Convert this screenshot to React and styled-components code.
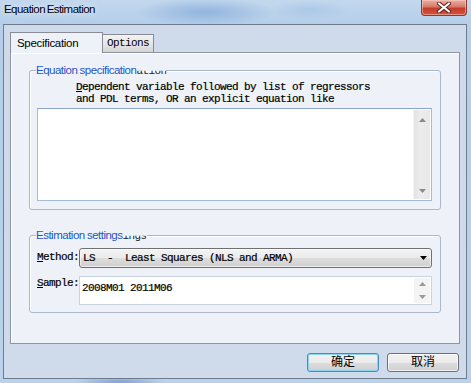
import React from 'react'
import styled, { createGlobalStyle } from 'styled-components'

const mono = `"Liberation Mono", "DejaVu Sans Mono", monospace`
const sans = `"Liberation Sans", Arial, sans-serif`
const cjk = `"Liberation Sans", "Noto Sans CJK SC", sans-serif`

const GlobalStyle = createGlobalStyle`
  html, body {
    margin: 0;
    padding: 0;
    background: #fff;
  }
  body {
    width: 471px;
    height: 383px;
    overflow: hidden;
  }
`

const Window = styled.div`
  width: 471px;
  height: 383px;
  box-sizing: border-box;
  padding: 0 4px 4px 3px;
  display: flex;
  flex-direction: column;
  background:
    radial-gradient(ellipse 70px 14px at 205px 12px, rgba(110, 155, 210, 0.55), transparent),
    radial-gradient(ellipse 40px 10px at 310px 10px, rgba(140, 180, 225, 0.35), transparent),
    radial-gradient(ellipse 45px 6px at 120px 382px, rgba(90, 130, 185, 0.6), transparent),
    linear-gradient(to bottom, #c3d8ee, #b5cee9 24px, #bad2eb);
`

const TitleBar = styled.div`
  height: 24px;
  display: flex;
  justify-content: space-between;
  align-items: flex-start;
`

const Title = styled.div`
  padding: 3px 0 0 1px;
  font-family: ${sans};
  font-size: 11.5px;
  letter-spacing: -0.55px;
  word-spacing: -1px;
  color: #000;
  text-shadow: 0 0 6px rgba(255, 255, 255, 0.9);
`

const CloseButton = styled.div`
  width: 46px;
  height: 16px;
  box-sizing: border-box;
  border: 1px solid #8a3b30;
  border-top: none;
  border-radius: 0 0 4px 4px;
  background: linear-gradient(to bottom, #eab1a6, #d77a6a 45%, #c53c2c 55%, #d0553d);
  box-shadow: inset 0 0 0 1px rgba(255, 210, 200, 0.5);
  display: flex;
  align-items: center;
  justify-content: center;
`

const Client = styled.div`
  flex: 1;
  box-sizing: border-box;
  border: 1px solid #6f7c8d;
  background: #cfdbea;
  padding: 7px 6px 6px 6px;
  display: flex;
  flex-direction: column;
`

const TabRow = styled.div`
  height: 20px;
  display: flex;
  align-items: flex-end;
`

const Tab = styled.div`
  box-sizing: border-box;
  border: 1px solid #898c95;
  border-bottom: none;
  position: relative;
  ${p => p.active ? `
    width: 93px;
    height: 21px;
    margin-bottom: -1px;
    z-index: 1;
    background: #eef2f8;
    padding: 4px 0 0 6px;
    font-family: ${sans};
    font-size: 11.5px;
    letter-spacing: -0.3px;
  ` : `
    width: 51px;
    height: 18px;
    background: linear-gradient(to bottom, #f3f3f3, #e6e6e6 50%, #d6d6d6);
    border-left: none;
    padding: 2px 0 0 4px;
    font-family: ${mono};
    font-size: 11px;
    letter-spacing: -0.6px;
  `}
  color: #000;
  white-space: pre;
`

const Panel = styled.div`
  height: 292px;
  box-sizing: border-box;
  border: 1px solid #8d95a1;
  background: #eef2f8;
  box-shadow: inset 1px 1px 0 #fff;
  padding: 10px 18px 0 18px;
  display: flex;
  flex-direction: column;
  gap: 18px;
`

const Group = styled.fieldset`
  margin: 0;
  min-width: 0;
  border: 1px solid #a9b8ca;
  border-radius: 3px;
  box-shadow: inset 1px 1px 0 #fff;
  padding: ${p => p.pad};
`

const Legend = styled.legend`
  margin-left: -1px;
  padding: 0;
  height: 14px;
  line-height: 14px;
  display: flex;
  align-items: center;
`

const LegendText = styled.span`
  font-family: ${sans};
  font-size: 11.5px;
  letter-spacing: -0.5px;
  word-spacing: -0.5px;
  color: #1d55c8;
`

const LegendGhost = styled.span`
  font-family: ${mono};
  font-size: 11px;
  letter-spacing: -0.6px;
  color: #222;
  clip-path: inset(55% 0 0 0);
  padding-top: 2px;
`

const MonoText = styled.div`
  font-family: ${mono};
  font-size: 11px;
  letter-spacing: -0.6px;
  line-height: 12px;
  color: #000;
  white-space: pre;
  -webkit-text-stroke: 0.2px #000;
`

const Description = styled(MonoText)`
  padding: 4px 0 0 39px;
  height: 27px;
`

const Hot = styled.span`
  text-decoration: underline;
`

const TextArea = styled.div`
  height: 93px;
  box-sizing: border-box;
  border: 1px solid #a4bad6;
  border-top-color: #8aa6cc;
  background: #fff;
  display: flex;
  justify-content: flex-end;
  padding: 1px;
`

const ScrollBar = styled.div`
  width: 17px;
  box-sizing: border-box;
  background: linear-gradient(to right, #e3e3e3, #ececec 40%, #e8e8e8);
  border-left: 1px solid #f4f4f4;
  display: flex;
  flex-direction: column;
  justify-content: space-between;
  align-items: center;
  padding: 8px 0 6px;
`

const Row = styled.div`
  display: grid;
  grid-template-columns: 42px 1fr;
  margin-bottom: ${p => p.gap || 0}px;
`

const Label = styled(MonoText)`
  padding-top: ${p => p.top}px;
`

const Select = styled.div`
  height: 20px;
  box-sizing: border-box;
  border: 1px solid #707070;
  border-radius: 3px;
  background: linear-gradient(to bottom, #f3f3f3, #ebebeb 50%, #dddddd 50%, #d0d0d0);
  box-shadow: inset 0 0 0 1px rgba(255, 255, 255, 0.6);
  display: flex;
  align-items: center;
  justify-content: space-between;
  padding: 0 4px 0 3px;
`

const SampleBox = styled.div`
  height: 29px;
  box-sizing: border-box;
  border: 1px solid #c9d3de;
  background: #fff;
  display: flex;
  justify-content: space-between;
  padding: 1px 1px 1px 2px;
`

const SampleText = styled(MonoText)`
  padding-top: 4px;
`

const Spin = styled.div`
  width: 16px;
  background: #f4f4f4;
  display: flex;
  flex-direction: column;
  justify-content: space-around;
  align-items: center;
`

const ButtonRow = styled.div`
  margin-top: 9px;
  display: flex;
  justify-content: flex-end;
  gap: 8px;
  padding-right: 1px;
`

const Button = styled.div`
  width: 72px;
  height: 19px;
  box-sizing: border-box;
  border: 1px solid ${p => p.focused ? '#3c8fc8' : '#707070'};
  border-radius: 3px;
  background: linear-gradient(to bottom, #f2f2f2, #ebebeb 50%, #dddddd 50%, #cfcfcf);
  box-shadow: ${p => p.focused ? 'inset 0 0 0 1px #8fd3f3' : 'inset 0 0 0 1px rgba(255,255,255,0.7)'};
  font-family: ${cjk};
  font-size: 12px;
  line-height: 17px;
  text-align: center;
  color: #000;
`

const Arrow = ({ up, color = '#8a8a8a', w = 7, h = 4 }) => (
  <svg width={w} height={h} viewBox={`0 0 ${w} ${h}`}>
    <polygon
      points={up ? `0,${h} ${w},${h} ${w / 2},0` : `0,0 ${w},0 ${w / 2},${h}`}
      fill={color}
    />
  </svg>
)

const CloseX = () => (
  <svg width="14" height="11" viewBox="0 0 14 11">
    <path
      d="M2 1.5 L12 9.5 M12 1.5 L2 9.5"
      stroke="#5a1f18"
      strokeWidth="4"
      strokeLinecap="round"
      fill="none"
    />
    <path
      d="M2 1.5 L12 9.5 M12 1.5 L2 9.5"
      stroke="#fff"
      strokeWidth="2.2"
      strokeLinecap="round"
      fill="none"
    />
  </svg>
)

export default function App() {
  return (
    <>
      <GlobalStyle />
      <Window>
        <TitleBar>
          <Title>Equation Estimation</Title>
          <CloseButton>
            <CloseX />
          </CloseButton>
        </TitleBar>
        <Client>
          <TabRow>
            <Tab active>Specification</Tab>
            <Tab>Options</Tab>
          </TabRow>
          <Panel>
            <Group pad="0 8px 8px 7px">
              <Legend>
                <LegendText>Equation specification</LegendText>
                <LegendGhost>ation</LegendGhost>
              </Legend>
              <Description>
                <Hot>D</Hot>ependent variable followed by list of regressors{'\n'}and PDL terms, OR an explicit equation like
              </Description>
              <TextArea>
                <ScrollBar>
                  <Arrow up />
                  <Arrow />
                </ScrollBar>
              </TextArea>
            </Group>
            <Group pad="6px 8px 7px 7px">
              <Legend>
                <LegendText>Estimation settings</LegendText>
                <LegendGhost>ings</LegendGhost>
              </Legend>
              <Row gap={8}>
                <Label top={3}>
                  <Hot>M</Hot>ethod:
                </Label>
                <Select>
                  <MonoText>LS  -  Least Squares (NLS and ARMA)</MonoText>
                  <Arrow color="#000" w={7} h={4} />
                </Select>
              </Row>
              <Row>
                <Label top={1}>
                  <Hot>S</Hot>ample:
                </Label>
                <SampleBox>
                  <SampleText>2008M01 2011M06</SampleText>
                  <Spin>
                    <Arrow up color="#9a9a9a" w={7} h={4} />
                    <Arrow color="#9a9a9a" w={7} h={4} />
                  </Spin>
                </SampleBox>
              </Row>
            </Group>
          </Panel>
          <ButtonRow>
            <Button focused>确定</Button>
            <Button>取消</Button>
          </ButtonRow>
        </Client>
      </Window>
    </>
  )
}
